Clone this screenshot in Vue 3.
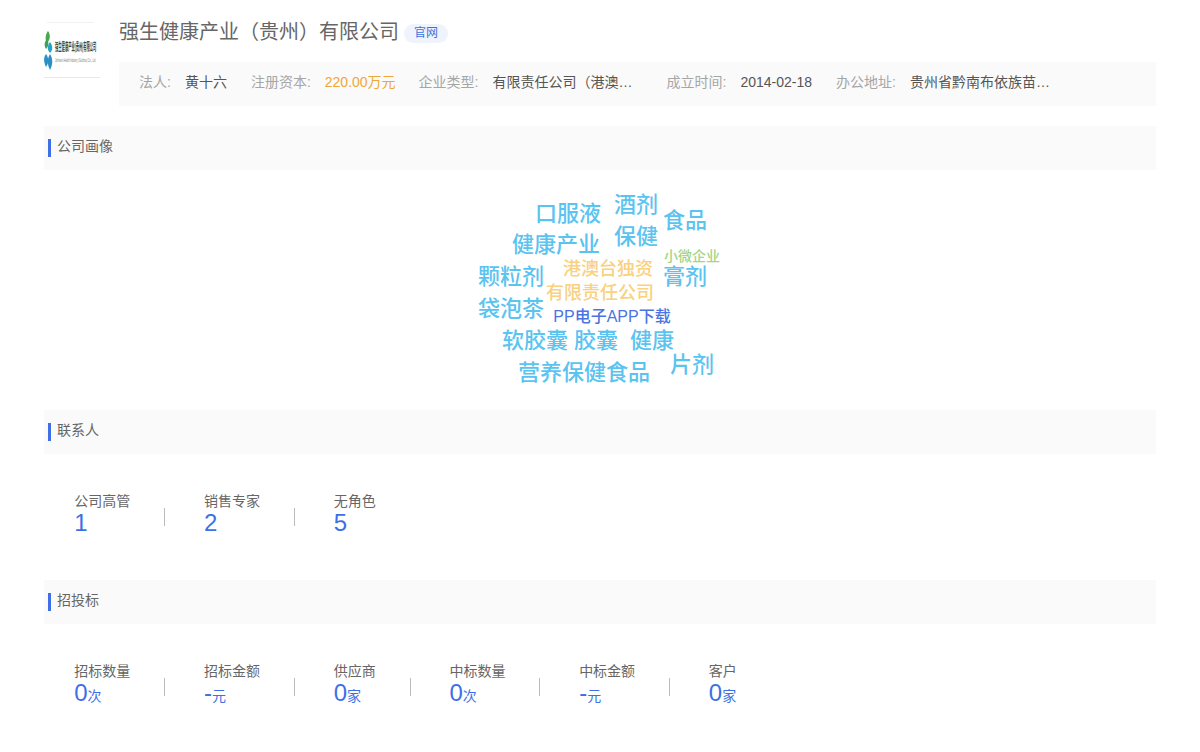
<script setup>
const cloudWords = [
  { t: '口服液', x: 568, y: 214, s: 22, c: '#5bc3f0' },
  { t: '酒剂', x: 636, y: 205, s: 22, c: '#5bc3f0' },
  { t: '食品', x: 685, y: 221, s: 22, c: '#5bc3f0' },
  { t: '健康产业', x: 556, y: 245, s: 22, c: '#5bc3f0' },
  { t: '保健', x: 636, y: 237, s: 22, c: '#5bc3f0' },
  { t: '小微企业', x: 692, y: 256, s: 14, c: '#a3d585' },
  { t: '港澳台独资', x: 608, y: 269, s: 18, c: '#f9d17f' },
  { t: '颗粒剂', x: 511, y: 277, s: 22, c: '#5bc3f0' },
  { t: '膏剂', x: 685, y: 277, s: 22, c: '#5bc3f0' },
  { t: '有限责任公司', x: 600, y: 293, s: 18, c: '#f9d17f' },
  { t: '袋泡茶', x: 511, y: 309, s: 22, c: '#5bc3f0' },
  { t: 'PP电子APP下载', x: 612, y: 317, s: 16, c: '#4a74e4' },
  { t: '软胶囊', x: 535, y: 341, s: 22, c: '#5bc3f0' },
  { t: '胶囊', x: 596, y: 341, s: 22, c: '#5bc3f0' },
  { t: '健康', x: 652, y: 341, s: 22, c: '#5bc3f0' },
  { t: '营养保健食品', x: 584, y: 373, s: 22, c: '#5bc3f0' },
  { t: '片剂', x: 692, y: 365, s: 22, c: '#5bc3f0' }
]

const wordStyle = (w) => ({
  left: `${w.x - 470}px`,
  top: `${w.y - 170}px`,
  fontSize: `${w.s}px`,
  color: w.c
})

const contacts = [
  { label: '公司高管', value: '1' },
  { label: '销售专家', value: '2' },
  { label: '无角色', value: '5' }
]

const bids = [
  { label: '招标数量', value: '0', unit: '次' },
  { label: '招标金额', value: '-', unit: '元' },
  { label: '供应商', value: '0', unit: '家' },
  { label: '中标数量', value: '0', unit: '次' },
  { label: '中标金额', value: '-', unit: '元' },
  { label: '客户', value: '0', unit: '家' }
]
</script>

<template>
  <div class="page">
    <header class="company">
      <div class="logo">
        <svg width="56" height="56" viewBox="0 0 56 56">
          <line x1="3" y1="0.5" x2="50" y2="0.5" stroke="#eef2f4" />
          <line x1="0" y1="55.5" x2="56" y2="55.5" stroke="#dfeaf2" />
          <path d="M4 9 C1 13 1 18 3 21 C6 18 7 13 4 9Z" fill="#4aa84c" />
          <path d="M3 17 C0 20 0 24 2 27 C5 24 5 20 3 17Z" fill="#3f9f58" />
          <path d="M6 20 C3 24 3 28 6 31 C9 28 9 24 6 20Z" fill="#29a3c4" />
          <path d="M2 32 C-1 36 0 41 2 45 C5 41 5 36 2 32Z" fill="#2b8fc6" />
          <path d="M6 32 C3 37 3 42 6 48 C9 42 9 37 6 32Z" fill="#2b8fc6" />
          <text transform="translate(11 29) scale(0.3 1)" class="logo-cn">强生健康产业|贵州|有限公司</text>
          <text transform="translate(11 40) scale(0.42 1)" class="logo-en">Johnson Health Industry (Guizhou) Co., Ltd.</text>
        </svg>
      </div>
      <div class="company-main">
        <div class="title-row">
          <h1 class="title">强生健康产业（贵州）有限公司</h1>
          <span class="badge">官网</span>
        </div>
        <div class="info-bar">
          <div class="info"><span class="info-label">法人:</span><span class="info-value">黄十六</span></div>
          <div class="info"><span class="info-label">注册资本:</span><span class="info-value money">220.00万元</span></div>
          <div class="info"><span class="info-label">企业类型:</span><span class="info-value clip">有限责任公司（港澳…</span></div>
          <div class="info"><span class="info-label">成立时间:</span><span class="info-value">2014-02-18</span></div>
          <div class="info"><span class="info-label">办公地址:</span><span class="info-value clip">贵州省黔南布依族苗…</span></div>
        </div>
      </div>
    </header>

    <section class="section">
      <h2 class="section-head"><span>公司画像</span></h2>
      <div class="cloud-wrap">
        <div class="cloud">
          <span v-for="w in cloudWords" :key="w.t" class="word" :style="wordStyle(w)">{{ w.t }}</span>
        </div>
      </div>
    </section>

    <section class="section">
      <h2 class="section-head"><span>联系人</span></h2>
      <div class="stats">
        <div v-for="c in contacts" :key="c.label" class="stat">
          <div class="stat-label">{{ c.label }}</div>
          <div class="stat-value">{{ c.value }}</div>
        </div>
      </div>
    </section>

    <section class="section">
      <h2 class="section-head"><span>招投标</span></h2>
      <div class="stats">
        <div v-for="b in bids" :key="b.label" class="stat">
          <div class="stat-label">{{ b.label }}</div>
          <div class="stat-value">{{ b.value }}<small class="unit">{{ b.unit }}</small></div>
        </div>
      </div>
    </section>
  </div>
</template>

<style>
body {
  background: #fff;
}
</style>

<style scoped>
.page {
  width: 1112px;
  margin-left: 44px;
  font-family: "Liberation Sans", "Noto Sans CJK SC", sans-serif;
  color: #333;
}
.company {
  display: flex;
  gap: 19px;
}
.logo {
  width: 56px;
  height: 56px;
  margin-top: 22px;
  flex: none;
}
.logo svg {
  display: block;
}
.logo-cn {
  font-size: 11px;
  font-weight: 700;
  fill: #3a4a44;
}
.logo-en {
  font-size: 5px;
  fill: #6a7a80;
}
.company-main {
  flex: 1;
  padding-top: 17px;
}
.title-row {
  display: flex;
  align-items: center;
  gap: 5px;
  height: 28px;
}
.title {
  margin: 2px 0 0;
  font-size: 20px;
  font-weight: 400;
  line-height: 28px;
  color: #666;
}
.badge {
  width: 44px;
  height: 19px;
  margin-top: 5px;
  border-radius: 10px;
  background: #eef3fd;
  color: #3b72e3;
  font-size: 12px;
  line-height: 19px;
  text-align: center;
}
.info-bar {
  display: flex;
  align-items: baseline;
  gap: 24px;
  height: 44px;
  margin-top: 17px;
  padding: 10px 0 0 20px;
  box-sizing: border-box;
  background: #fafafa;
  font-size: 14px;
  line-height: 20px;
}
.info {
  display: flex;
  align-items: baseline;
  white-space: nowrap;
}
.info-label {
  color: #a6a6a6;
  margin-right: 14px;
}
.info-value {
  color: #555;
}
.money {
  color: #f0a63a;
  margin-right: -1px;
}
.clip {
  width: 150px;
}
.section {
  margin-top: 20px;
}
.section + .section {
  margin-top: 0;
}
.section-head {
  display: flex;
  align-items: flex-start;
  height: 44px;
  margin: 0;
  padding-left: 4px;
  background: #fafafa;
  font-size: 14px;
  font-weight: 400;
  color: #666;
}
.section-head span {
  margin-top: 13px;
  padding-left: 6px;
  height: 18px;
  line-height: 14px;
  border-left: 3px solid #3e6fe6;
}
.cloud-wrap {
  height: 240px;
}
.cloud {
  position: relative;
  width: 260px;
  height: 240px;
  margin: 0 auto;
}
.word {
  position: absolute;
  font-weight: 500;
  line-height: 1;
  white-space: nowrap;
  transform: translate(-50%, -50%);
}
.stats {
  display: flex;
  padding: 37px 0 45px 30.2px;
}
.stat {
  position: relative;
  padding-right: 33.9px;
  margin-right: 39.85px;
}
.stat:not(:last-child)::after {
  content: "";
  position: absolute;
  right: -1px;
  top: 17px;
  width: 1px;
  height: 18px;
  background: #bbb;
}
.stat-label {
  font-size: 14px;
  line-height: 20px;
  color: #666;
}
.stat-value {
  height: 24px;
  font-size: 24px;
  line-height: 24px;
  color: #3e6fe6;
}
.unit {
  font-size: 14px;
}
</style>
